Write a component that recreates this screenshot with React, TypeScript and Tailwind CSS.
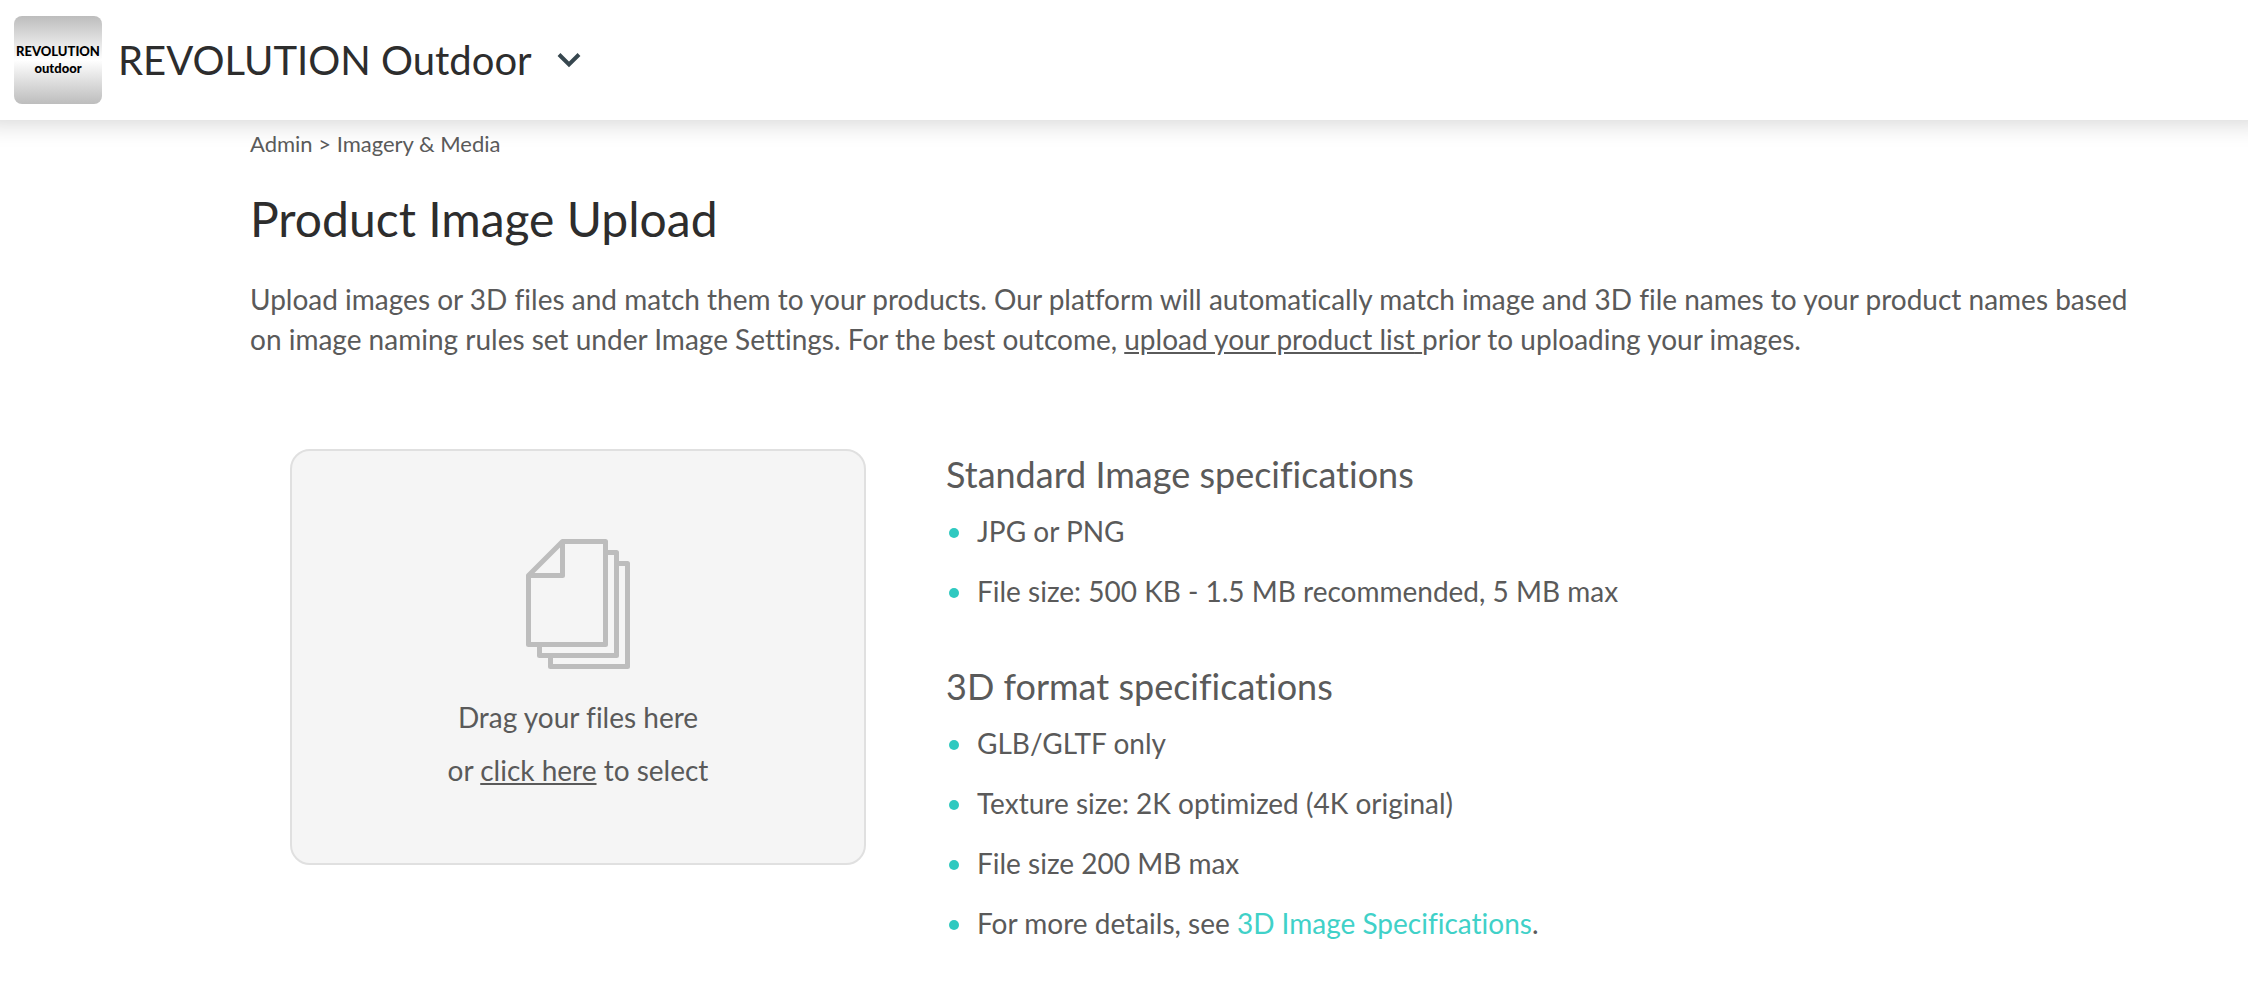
import React, { useRef, useState } from 'react';

interface SpecSection {
  title: string;
  items: React.ReactNode[];
}

const specSections: SpecSection[] = [
  {
    title: 'Standard Image specifications',
    items: ['JPG or PNG', 'File size: 500 KB - 1.5 MB recommended, 5 MB max'],
  },
  {
    title: '3D format specifications',
    items: [
      'GLB/GLTF only',
      'Texture size: 2K optimized (4K original)',
      'File size 200 MB max',
      <>
        For more details, see{' '}
        <a href="#specifications" className="text-[#40d1c8]">
          3D Image Specifications
        </a>
        .
      </>,
    ],
  },
];

const FilesIcon: React.FC = () => (
  <svg
    width="104"
    height="130"
    viewBox="0 0 104 130"
    fill="none"
    stroke="#bdbdbd"
    strokeWidth="5"
    strokeLinejoin="round"
    aria-hidden="true"
  >
    <path d="M36.5 2.5H79.5V105.5H2.5V36.5Z" />
    <path d="M36.5 2.5V36.5H2.5" />
    <path d="M82 13.5H90.5V116.5H13.5V108" />
    <path d="M93 24.5H101.5V127.5H24.5V119" />
  </svg>
);

const Header: React.FC = () => (
  <header className="flex h-[120px] items-center bg-white px-3.5 shadow-[0_-18px_24px_20px_rgba(0,0,0,0.18)]">
    <div className="flex size-[88px] flex-col items-center justify-center rounded-lg bg-linear-to-b from-[#bdbdbd] via-white to-[#bdbdbd] text-[13px] leading-[17px] font-black text-black">
      <span>REVOLUTION</span>
      <span>outdoor</span>
    </div>
    <button type="button" className="ml-4 flex items-center gap-[25px] text-[40px] leading-12 text-[#2d2d2d]">
      REVOLUTION Outdoor
      <svg width="24" height="16" viewBox="0 0 24 16" fill="none" stroke="#37474f" strokeWidth="4" aria-hidden="true">
        <path d="M2 2.5L12 12.5L22 2.5" />
      </svg>
    </button>
  </header>
);

const DropZone: React.FC = () => {
  const inputRef = useRef<HTMLInputElement>(null);
  const [files, setFiles] = useState<File[]>([]);

  const handleDrop = (e: React.DragEvent<HTMLDivElement>) => {
    e.preventDefault();
    setFiles([...files, ...Array.from(e.dataTransfer.files)]);
  };

  return (
    <div
      className="flex w-[576px] shrink-0 flex-col items-center self-start rounded-[20px] border-2 border-[#e0e0e0] bg-[#f5f5f5] pt-22 pb-[66px]"
      onDragOver={(e) => e.preventDefault()}
      onDrop={handleDrop}
    >
      <FilesIcon />
      <p className="mt-[22px] text-center leading-[53px]">
        Drag your files here
        <br />
        or{' '}
        <button type="button" className="underline" onClick={() => inputRef.current?.click()}>
          click here
        </button>{' '}
        to select
      </p>
      <input
        ref={inputRef}
        type="file"
        multiple
        aria-label="Select files"
        className="hidden"
        onChange={(e) => setFiles(Array.from(e.target.files || []))}
      />
    </div>
  );
};

export default function App() {
  return (
    <div className="min-h-screen overflow-x-hidden bg-white font-['Lato',sans-serif] text-[28px] leading-10 text-[#5a5a5a] [font-variant-ligatures:none]">
      <Header />
      <main className="pt-2 pr-22 pl-[250px]">
        <nav aria-label="Breadcrumb" className="text-[22px] leading-8">
          Admin &gt; Imagery &amp; Media
        </nav>
        <h1 className="mt-[27px] text-[48px] leading-16 text-[#2d2d2d]">Product Image Upload</h1>
        <p className="mt-7">
          Upload images or 3D files and match them to your products. Our platform will automatically match image and 3D
          file names to your product names based on image naming rules set under Image Settings. For the best outcome,{' '}
          <a href="#product-list" className="underline">
            upload your product list{' '}
          </a>
          prior to uploading your images.
        </p>

        <div className="mt-[90px] flex gap-20 pl-10">
          <DropZone />
          <div className="flex flex-col gap-[50px]">
            {specSections.map((section) => (
              <section key={section.title}>
                <h2 className="text-[36px] leading-[50px]">{section.title}</h2>
                <ul className="mt-3 flex flex-col gap-5">
                  {section.items.map((item, index) => (
                    <li key={index} className="flex items-center gap-[18px] pl-[3px]">
                      <span className="mt-1 size-2.5 shrink-0 rounded-full bg-[#2fc9c0]" />
                      <span>{item}</span>
                    </li>
                  ))}
                </ul>
              </section>
            ))}
          </div>
        </div>
      </main>
    </div>
  );
}
